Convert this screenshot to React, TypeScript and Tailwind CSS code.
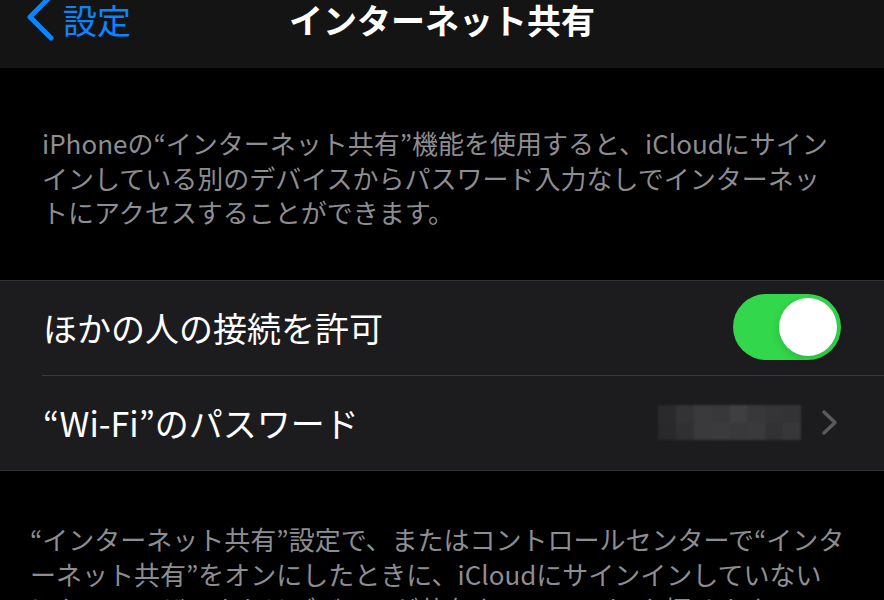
import React from "react";

const font = {
  fontFamily: '"Noto Sans CJK JP", "Noto Sans", sans-serif',
};

function Mosaic() {
  const cells = [
    "#2a2a2c", "#333336", "#3a3a3d", "#38383b", "#3f3f42", "#38383b", "#353538", "#333336",
    "#29292b", "#303033", "#3a3a3d", "#3b3b3e", "#39393c", "#3a3a3d", "#323235", "#37373a",
  ];
  return (
    <div className="grid grid-cols-8 grid-rows-2 w-[143px] h-[35px] overflow-hidden">
      {cells.map((c, i) => (
        <div key={i} style={{ backgroundColor: c }} />
      ))}
    </div>
  );
}

export default function App() {
  return (
    <div className="w-[884px] h-[600px] overflow-hidden bg-black" style={font}>
      {/* nav bar */}
      <div className="h-[68px] bg-[#141414] grid grid-cols-[1fr_auto_1fr] items-start">
        <div className="flex items-center h-[40px] pl-[25px] gap-[10px] text-[#0a84ff]">
          <svg width="30" height="48" viewBox="0 0 30 48" className="-mt-[6px]">
            <path
              d="M26 3 L5 24 L26 45"
              fill="none"
              stroke="#0a84ff"
              strokeWidth="5"
              strokeLinecap="round"
              strokeLinejoin="round"
            />
          </svg>
          <span className="text-[34px] leading-[40px] -ml-[2px]">設定</span>
        </div>
        <div className="h-[40px] flex items-center text-white text-[34px] leading-[40px] font-semibold">
          インターネット共有
        </div>
        <div />
      </div>

      {/* description */}
      <div className="pl-[42px] pt-[58px] pb-[50px] text-[#8d8d93] text-[26px] leading-[34.5px] whitespace-nowrap">
        iPhoneの“インターネット共有”機能を使用すると、iCloudにサイン
        <br />
        インしている別のデバイスからパスワード入力なしでインターネッ
        <br />
        トにアクセスすることができます。
      </div>

      {/* group */}
      <div className="bg-[#1c1c1e] border-t border-b border-[#323234]">
        <div className="h-[94px] flex items-center justify-between pl-[43px] pr-[43px]">
          <span className="text-white text-[34px] leading-[40px]">ほかの人の接続を許可</span>
          <div className="w-[108px] h-[66px] rounded-full bg-[#32d74b] flex items-center justify-end pr-[4px] mt-[-1px]">
            <div className="w-[58px] h-[58px] rounded-full bg-white shadow-[0_3px_8px_rgba(0,0,0,0.15)]" />
          </div>
        </div>
        <div className="ml-[42px] h-px bg-[#3a3a3c]" />
        <div className="h-[94px] flex items-center justify-between pl-[43px] pr-[46px]">
          <span className="text-white text-[34px] leading-[40px]">“Wi-Fi”のパスワード</span>
          <div className="flex items-center gap-[20px]">
            <div className="blur-[1px]">
              <Mosaic />
            </div>
            <svg width="17" height="27" viewBox="0 0 17 27">
              <path
                d="M3 3 L14 13.5 L3 24"
                fill="none"
                stroke="#5b5b5f"
                strokeWidth="3.5"
                strokeLinecap="round"
                strokeLinejoin="round"
              />
            </svg>
          </div>
        </div>
      </div>

      {/* footer */}
      <div className="pl-[30px] pt-[50px] text-[#8d8d93] text-[26px] leading-[35px] whitespace-nowrap">
        “インターネット共有”設定で、またはコントロールセンターで“インタ
        <br />
        ーネット共有”をオンにしたときに、iCloudにサインインしていない
        <br />
        ほかのユーザーまたはデバイスが共有ネットワーク“を探せます。
      </div>
    </div>
  );
}
